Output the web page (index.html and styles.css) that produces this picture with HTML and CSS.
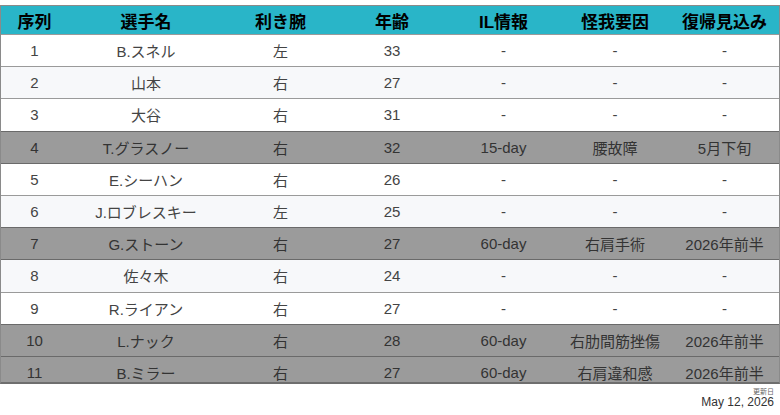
FILE: index.html
```html
<!DOCTYPE html>
<html lang="ja">
<head>
<meta charset="utf-8">
<link rel="stylesheet" href="styles.css">
</head>
<body>
<div class="page">
  <div class="table-wrap">
    <table class="roster">
      <colgroup>
        <col class="c1"><col class="c2"><col class="c3"><col class="c4"><col class="c5"><col class="c6"><col class="c7">
      </colgroup>
      <thead>
        <tr><th>序列</th><th>選手名</th><th>利き腕</th><th>年齢</th><th>IL情報</th><th>怪我要因</th><th>復帰見込み</th></tr>
      </thead>
      <tbody>
        <tr><td>1</td><td>B.スネル</td><td>左</td><td>33</td><td>-</td><td>-</td><td>-</td></tr>
        <tr class="alt"><td>2</td><td>山本</td><td>右</td><td>27</td><td>-</td><td>-</td><td>-</td></tr>
        <tr><td>3</td><td>大谷</td><td>右</td><td>31</td><td>-</td><td>-</td><td>-</td></tr>
        <tr class="il"><td>4</td><td>T.グラスノー</td><td>右</td><td>32</td><td>15-day</td><td>腰故障</td><td>5月下旬</td></tr>
        <tr><td>5</td><td>E.シーハン</td><td>右</td><td>26</td><td>-</td><td>-</td><td>-</td></tr>
        <tr class="alt"><td>6</td><td>J.ロブレスキー</td><td>左</td><td>25</td><td>-</td><td>-</td><td>-</td></tr>
        <tr class="il"><td>7</td><td>G.ストーン</td><td>右</td><td>27</td><td>60-day</td><td>右肩手術</td><td>2026年前半</td></tr>
        <tr class="alt"><td>8</td><td>佐々木</td><td>右</td><td>24</td><td>-</td><td>-</td><td>-</td></tr>
        <tr><td>9</td><td>R.ライアン</td><td>右</td><td>27</td><td>-</td><td>-</td><td>-</td></tr>
        <tr class="il"><td>10</td><td>L.ナック</td><td>右</td><td>28</td><td>60-day</td><td>右肋間筋挫傷</td><td>2026年前半</td></tr>
        <tr class="il"><td>11</td><td>B.ミラー</td><td>右</td><td>27</td><td>60-day</td><td>右肩違和感</td><td>2026年前半</td></tr>
      </tbody>
    </table>
  </div>
  <div class="updated">
    <div class="updated-label">更新日</div>
    <div class="updated-date">May 12, 2026</div>
  </div>
</div>
</body>
</html>
```

FILE: styles.css
```css
html, body {
  margin: 0;
  padding: 0;
  background: #ffffff;
}

body {
  font-family: "Liberation Sans", Arial, "Noto Sans CJK JP", sans-serif;
  width: 780px;
  height: 415px;
  overflow: hidden;
}

.page {
  padding-top: 5px;
}

.table-wrap {
  width: 778px;
  height: 376px;
  overflow: hidden;
  border: 1px solid #8a8a8a;
  border-bottom-width: 2px;
  border-bottom-color: #6e6e6e;
}

.roster {
  width: 778px;
  border-collapse: collapse;
  table-layout: fixed;
}

.c1 { width: 67px; }
.c2 { width: 156px; }
.c3 { width: 113px; }
.c4 { width: 110px; }
.c5 { width: 113px; }
.c6 { width: 110px; }
.c7 { width: 109px; }

.roster th {
  background: #29b5c8;
  color: #000000;
  font-family: "Liberation Sans", Arial, "Noto Sans CJK JP", sans-serif;
  font-weight: bold;
  font-size: 17px;
  height: 28px;
  padding: 0;
  text-align: center;
  vertical-align: middle;
}

.roster td {
  height: 31.2px;
  padding: 0;
  text-align: center;
  vertical-align: middle;
  font-size: 15px;
  color: #444444;
  background: #ffffff;
  border-top: 1px solid #9a9a9a;
}

.roster tr.alt td {
  background: #f7f8fa;
}

.roster tr.il td {
  background: #9b9b9b;
  color: #333333;
  border-top: 1px solid #6a6a6a;
}

.roster tr.il + tr td {
  border-top: 1px solid #6a6a6a;
}

.updated {
  display: flex;
  flex-direction: column;
  align-items: flex-end;
  padding-right: 6px;
  padding-top: 3px;
}

.updated-label {
  font-size: 7px;
  line-height: 9px;
  color: #666666;
  font-family: "Noto Sans CJK JP", sans-serif;
}

.updated-date {
  font-size: 12px;
  line-height: 12px;
  color: #333333;
}
```
